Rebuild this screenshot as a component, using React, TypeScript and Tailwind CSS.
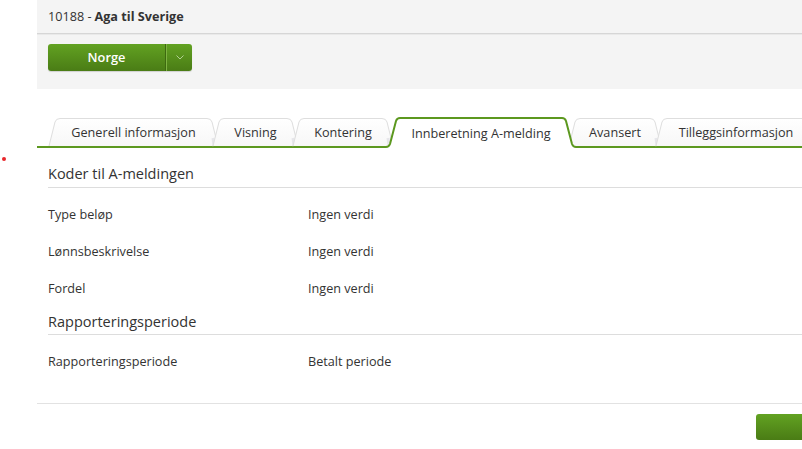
import React from "react";

type Tab = { label: string; width: number; active?: boolean };

const tabs: Tab[] = [
  { label: "Generell informasjon", width: 169 },
  { label: "Visning", width: 85 },
  { label: "Kontering", width: 100 },
  { label: "Innberetning A-melding", width: 186, active: true },
  { label: "Avansert", width: 92 },
  { label: "Tilleggsinformasjon", width: 160 },
];

function TabShape({ w, active }: { w: number; active?: boolean }) {
  const h = active ? 31 : 28;
  if (active) {
    const d = `M-6,${h - 1} L-2,${h - 1} Q1,${h - 1} 2,${h - 4} L8,4 Q9,1 12,1 L${w - 12},1 Q${w - 9},1 ${w - 8},4 L${w - 2},${h - 4} Q${w - 1},${h - 1} ${w + 2},${h - 1} L${w + 6},${h - 1}`;
    return (
      <svg className="absolute left-0 top-0 overflow-visible" width={w} height={h} viewBox={`0 0 ${w} ${h}`}>
        <path d={`M0,${h} L2,${h - 4} L8,4 Q9,1 12,1 L${w - 12},1 Q${w - 9},1 ${w - 8},4 L${w - 2},${h - 4} L${w},${h} Z`} fill="#ffffff" />
        <rect x={-2} y={h - 2} width={w + 4} height={3} fill="#ffffff" />
        <path d={d} fill="none" stroke="#5c981f" strokeWidth={2} strokeLinejoin="round" />
      </svg>
    );
  }
  const d = `M0,${h} L6,4 Q7,0.5 11,0.5 L${w - 11},0.5 Q${w - 7},0.5 ${w - 6},4 L${w},${h}`;
  return (
    <svg className="absolute left-0 top-0 overflow-visible" width={w} height={h} viewBox={`0 0 ${w} ${h}`}>
      <defs>
        <linearGradient id="tabg" x1="0" y1="0" x2="0" y2="1">
          <stop offset="0" stopColor="#ffffff" />
          <stop offset="1" stopColor="#f7f7f7" />
        </linearGradient>
      </defs>
      <path d={`${d} Z`} fill="url(#tabg)" />
      <path d={`M${w - 4},${h} L${w - 5},${h - 8}`} stroke="#e6e6ea" strokeWidth={3} fill="none" />
      <path d={d} fill="none" stroke="#dedede" strokeWidth={1} />
    </svg>
  );
}

function Row({ label, value }: { label: string; value: string }) {
  return (
    <div className="flex h-[37px] items-center text-[12.65px] text-[#333]">
      <div className="w-[260px]">{label}</div>
      <div>{value}</div>
    </div>
  );
}

export default function App() {
  return (
    <div
      className="flex h-[449px] w-[802px] overflow-hidden bg-white text-[#333]"
      style={{ fontFamily: '"Open Sans", "Noto Sans", sans-serif' }}
    >
      <div className="w-[37px] shrink-0 pt-[157px] pl-[2px]">
        <div className="h-[4px] w-[4px] rounded-full bg-[#e8262a]" />
      </div>
      <div className="flex min-w-0 flex-1 flex-col overflow-hidden">
        <div className="h-[89px] bg-[#f4f4f4]">
          <div className="flex h-[33px] items-center pl-[11px] text-[12.65px] text-[#333]">
            <span>10188 - </span>
            <span className="ml-[3px] font-bold">Aga til Sverige</span>
          </div>
          <div className="h-px bg-[#d6d6d6]" />
          <div className="h-px bg-[#e9e9e9]" />
          <div className="mt-[9px] pl-[11px]">
            <div className="flex h-[27px] w-[144px] overflow-hidden rounded-[3px] bg-gradient-to-b from-[#62a222] to-[#4a7c15] shadow-[0_1px_1px_rgba(0,0,0,0.15)]">
              <div className="flex w-[117px] items-center justify-center text-[12.8px] font-semibold text-white">
                Norge
              </div>
              <div className="w-px bg-[#3e6a10]" />
              <div className="w-px bg-[#7fb443]" />
              <div className="flex flex-1 items-center justify-center">
                <svg width="8" height="5" viewBox="0 0 8 5">
                  <path d="M0.5 0.5 L4 4 L7.5 0.5" fill="none" stroke="#c9dfb3" strokeWidth="0.8" />
                </svg>
              </div>
            </div>
          </div>
        </div>

        <div className="mt-[28px] flex h-[31px] items-end border-b-2 border-[#5c981f] pl-[12px]">
          {tabs.map((t, i) => (
            <div
              key={t.label}
              className={`relative shrink-0 ${t.active ? "z-10 -mb-[2px] h-[31px]" : "h-[28px]"} ${i > 0 ? "-ml-[5px]" : ""}`}
              style={{ width: t.width }}
            >
              <TabShape w={t.width} active={t.active} />
              <div className="relative flex h-full items-center justify-center whitespace-nowrap pt-[1px] text-[12.65px] text-[#333]">
                {t.label}
              </div>
            </div>
          ))}
        </div>

        <div className="pl-[11px]">
          <div className="mt-[16px] border-b border-[#dddddd] pb-[3px] text-[14.5px] leading-[20px] text-[#333]">
            Koder til A-meldingen
          </div>
          <div className="mt-[8px]">
            <Row label="Type beløp" value="Ingen verdi" />
            <Row label="Lønnsbeskrivelse" value="Ingen verdi" />
            <Row label="Fordel" value="Ingen verdi" />
          </div>
          <div className="mt-[5px] border-b border-[#dddddd] pb-[2px] text-[14.5px] leading-[20px] text-[#333]">
            Rapporteringsperiode
          </div>
          <div className="mt-[8px]">
            <Row label="Rapporteringsperiode" value="Betalt periode" />
          </div>
        </div>
        <div className="mt-[23px] h-px bg-[#e2e2e2]" />
        <div className="mt-[10px] flex justify-end">
          <div className="-mr-[14px] h-[26px] w-[60px] rounded-[3px] bg-gradient-to-b from-[#62a222] to-[#4a7c15]" />
        </div>
      </div>
    </div>
  );
}
